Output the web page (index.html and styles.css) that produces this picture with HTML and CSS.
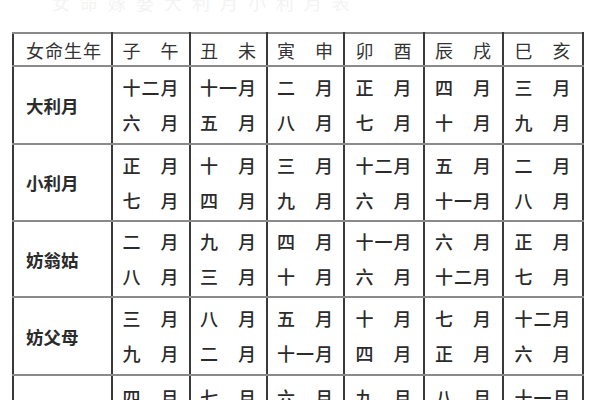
FILE: index.html
```html
<!DOCTYPE html>
<html lang="zh">
<head>
<meta charset="utf-8">
<link rel="stylesheet" href="styles.css">
</head>
<body>
<div class="page">
  <div class="caption">女命嫁娶大利月小利月表</div>
  <table class="grid">
    <colgroup>
      <col class="c0"><col class="c1"><col class="c2"><col class="c3"><col class="c4"><col class="c5"><col class="c6">
    </colgroup>
    <tr class="head">
      <th class="label">女命生年</th>
      <th>子　午</th><th>丑　未</th><th>寅　申</th><th>卯　酉</th><th>辰　戌</th><th>巳　亥</th>
    </tr>
    <tr class="r1">
      <td class="label">大利月</td>
      <td>十二月<br>六　月</td><td>十一月<br>五　月</td><td>二　月<br>八　月</td><td>正　月<br>七　月</td><td>四　月<br>十　月</td><td>三　月<br>九　月</td>
    </tr>
    <tr class="r2">
      <td class="label">小利月</td>
      <td>正　月<br>七　月</td><td>十　月<br>四　月</td><td>三　月<br>九　月</td><td>十二月<br>六　月</td><td>五　月<br>十一月</td><td>二　月<br>八　月</td>
    </tr>
    <tr class="r3">
      <td class="label">妨翁姑</td>
      <td>二　月<br>八　月</td><td>九　月<br>三　月</td><td>四　月<br>十　月</td><td>十一月<br>六　月</td><td>六　月<br>十二月</td><td>正　月<br>七　月</td>
    </tr>
    <tr class="r4">
      <td class="label">妨父母</td>
      <td>三　月<br>九　月</td><td>八　月<br>二　月</td><td>五　月<br>十一月</td><td>十　月<br>四　月</td><td>七　月<br>正　月</td><td>十二月<br>六　月</td>
    </tr>
    <tr class="r5">
      <td class="label">妨夫主</td>
      <td>四　月<br>十　月</td><td>七　月<br>正　月</td><td>六　月<br>十二月</td><td>九　月<br>三　月</td><td>八　月<br>二　月</td><td>十一月<br>五　月</td>
    </tr>
  </table>
</div>
</body>
</html>
```
FILE: styles.css
```css
html, body {
  margin: 0;
  padding: 0;
  background: #ffffff;
}
body {
  width: 600px;
  height: 400px;
  overflow: hidden;
  font-family: "Noto Sans CJK SC", "Noto Sans", sans-serif;
  color: #2b2b2b;
}
.page {
  padding-left: 12px;
}
.caption {
  height: 32px;
  line-height: 4px;
  font-size: 18px;
  color: #f3f3f3;
  overflow: hidden;
  padding-left: 40px;
  letter-spacing: 10px;
}
.grid {
  border-collapse: collapse;
  table-layout: fixed;
  width: 571px;
}
.c0 { width: 99px; }
.c1 { width: 78px; }
.c2 { width: 77px; }
.c3 { width: 77px; }
.c4 { width: 80px; }
.c5 { width: 79px; }
.c6 { width: 80px; }

.grid th,
.grid td {
  border-left: 2px solid #3a3a3a;
  border-right: 2px solid #3a3a3a;
  border-top: 2px solid #8a8a8a;
  border-bottom: 2px solid #8a8a8a;
  padding: 0;
  text-align: center;
  font-size: 18px;
  font-weight: 500;
  line-height: 35px;
  letter-spacing: 1px;
  white-space: nowrap;
  vertical-align: middle;
}
.grid th {
  font-weight: 400;
  color: #333;
}
.grid .label {
  text-align: left;
  padding-left: 12px;
  font-size: 17.5px;
  font-weight: 700;
  letter-spacing: 0;
}
.grid th.label {
  font-weight: 400;
  font-size: 18px;
  letter-spacing: 1px;
}
.head { height: 33px; }
.head th { line-height: 28px; }
.r1 { height: 78px; }
.r2 { height: 77px; }
.r3 { height: 76px; }
.r4 { height: 78px; }
.r5 { height: 78px; }
.r5 td { vertical-align: top; padding-top: 4px; }
.r5 td.label { vertical-align: middle; padding-top: 0; }
```
